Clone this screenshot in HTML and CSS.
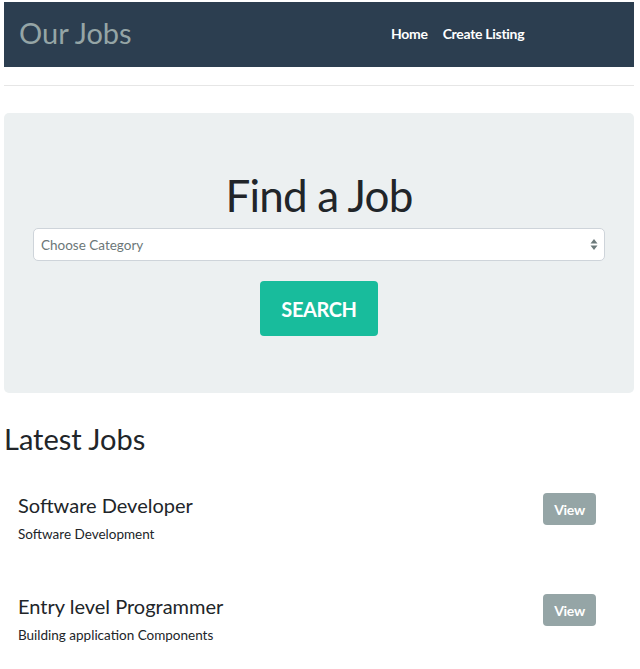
FILE: index.html
```html
<!DOCTYPE html>
<html lang="en">
<head>
<meta charset="utf-8">
<title>Our Jobs</title>
<link rel="stylesheet" href="styles.css">
</head>
<body>
<div class="page">
  <nav class="navbar">
    <span class="brand">Our Jobs</span>
    <ul class="nav-links">
      <li><a href="#">Home</a></li>
      <li><a href="#">Create Listing</a></li>
    </ul>
  </nav>
  <hr class="divider">
  <section class="jumbotron">
    <h1 class="jumbo-title">Find a Job</h1>
    <div class="select">
      <span class="select-text">Choose Category</span>
      <svg class="select-arrows" width="8" height="13" viewBox="0 0 8 13"><path d="M4 1 L7.5 5.5 H0.5 Z M4 12 L7.5 7.5 H0.5 Z" fill="#6c7a7b"/></svg>
    </div>
    <div class="search-row">
      <button class="btn-search">SEARCH</button>
    </div>
  </section>
  <h2 class="section-title">Latest Jobs</h2>
  <div class="jobs">
    <div class="job">
      <div class="job-info">
        <h3 class="job-title">Software Developer</h3>
        <p class="job-desc">Software Development</p>
      </div>
      <a class="btn-view" href="#">View</a>
    </div>
    <div class="job">
      <div class="job-info">
        <h3 class="job-title">Entry level Programmer</h3>
        <p class="job-desc">Building application Components</p>
      </div>
      <a class="btn-view" href="#">View</a>
    </div>
  </div>
</div>
</body>
</html>
```
FILE: styles.css
```css
* { box-sizing: border-box; }
html, body { margin: 0; padding: 0; background: #fff; }
body {
  font-family: Lato, "Open Sans", "Liberation Sans", sans-serif;
  color: #212529;
}
.page {
  width: 630px;
  margin: 0 0 0 4px;
  padding-top: 2px;
}
.navbar {
  height: 65px;
  background: #2c3e50;
  display: flex;
  align-items: center;
  padding-left: 15px;
}
.brand {
  font-size: 29px;
  line-height: 34px;
  color: #95a5a6;
  margin-top: -3px;
  width: 118px;
}
.nav-links {
  list-style: none;
  margin: -4px 0 0 254px;
  padding: 0;
  display: flex;
  gap: 15px;
}
.nav-links a {
  color: #fff;
  text-decoration: none;
  font-weight: bold;
  font-size: 14px;
  letter-spacing: -0.3px;
}
.divider {
  margin: 18px 0 0 0;
  border: 0;
  border-top: 1px solid #e6e6e6;
  height: 0;
}
.jumbotron {
  margin-top: 27px;
  height: 280px;
  background: #ecf0f1;
  border-radius: 5px;
  padding: 56px 29px 0 29px;
}
.jumbo-title {
  margin: 0;
  text-align: center;
  font-size: 44px;
  line-height: 53px;
  font-weight: normal;
  letter-spacing: -0.8px;
  color: #212529;
}
.select {
  margin-top: 6px;
  height: 33px;
  background: #fff;
  border: 1px solid #ced4da;
  border-radius: 5px;
  display: flex;
  align-items: center;
  justify-content: space-between;
  padding: 0 6px 0 7px;
}
.select-text {
  font-size: 13.5px;
  color: #6c7778;
}
.search-row {
  display: flex;
  justify-content: center;
  margin-top: 20px;
}
.btn-search {
  width: 118px;
  height: 55px;
  border: 0;
  border-radius: 4px;
  background: #18bc9c;
  color: #fff;
  font-family: inherit;
  font-weight: bold;
  font-size: 20px;
  letter-spacing: -0.4px;
  padding: 0;
}
.section-title {
  margin: 29px 0 0 0;
  font-size: 29px;
  line-height: 34px;
  font-weight: normal;
  color: #212529;
}
.jobs {
  margin-top: 37px;
  padding: 0 38px 0 14px;
  display: flex;
  flex-direction: column;
  gap: 50px;
}
.job {
  display: flex;
  justify-content: space-between;
  align-items: flex-start;
}
.job-title {
  margin: 0;
  font-size: 20px;
  line-height: 24px;
  font-weight: normal;
  color: #212529;
}
.job-desc {
  margin: 7px 0 0 0;
  font-size: 13.5px;
  line-height: 20px;
  color: #212529;
}
.btn-view {
  width: 53px;
  height: 32px;
  display: flex;
  align-items: center;
  justify-content: center;
  background: #95a5a6;
  color: #fff;
  border-radius: 4px;
  text-decoration: none;
  font-weight: bold;
  font-size: 14px;
  letter-spacing: -0.3px;
}
```
